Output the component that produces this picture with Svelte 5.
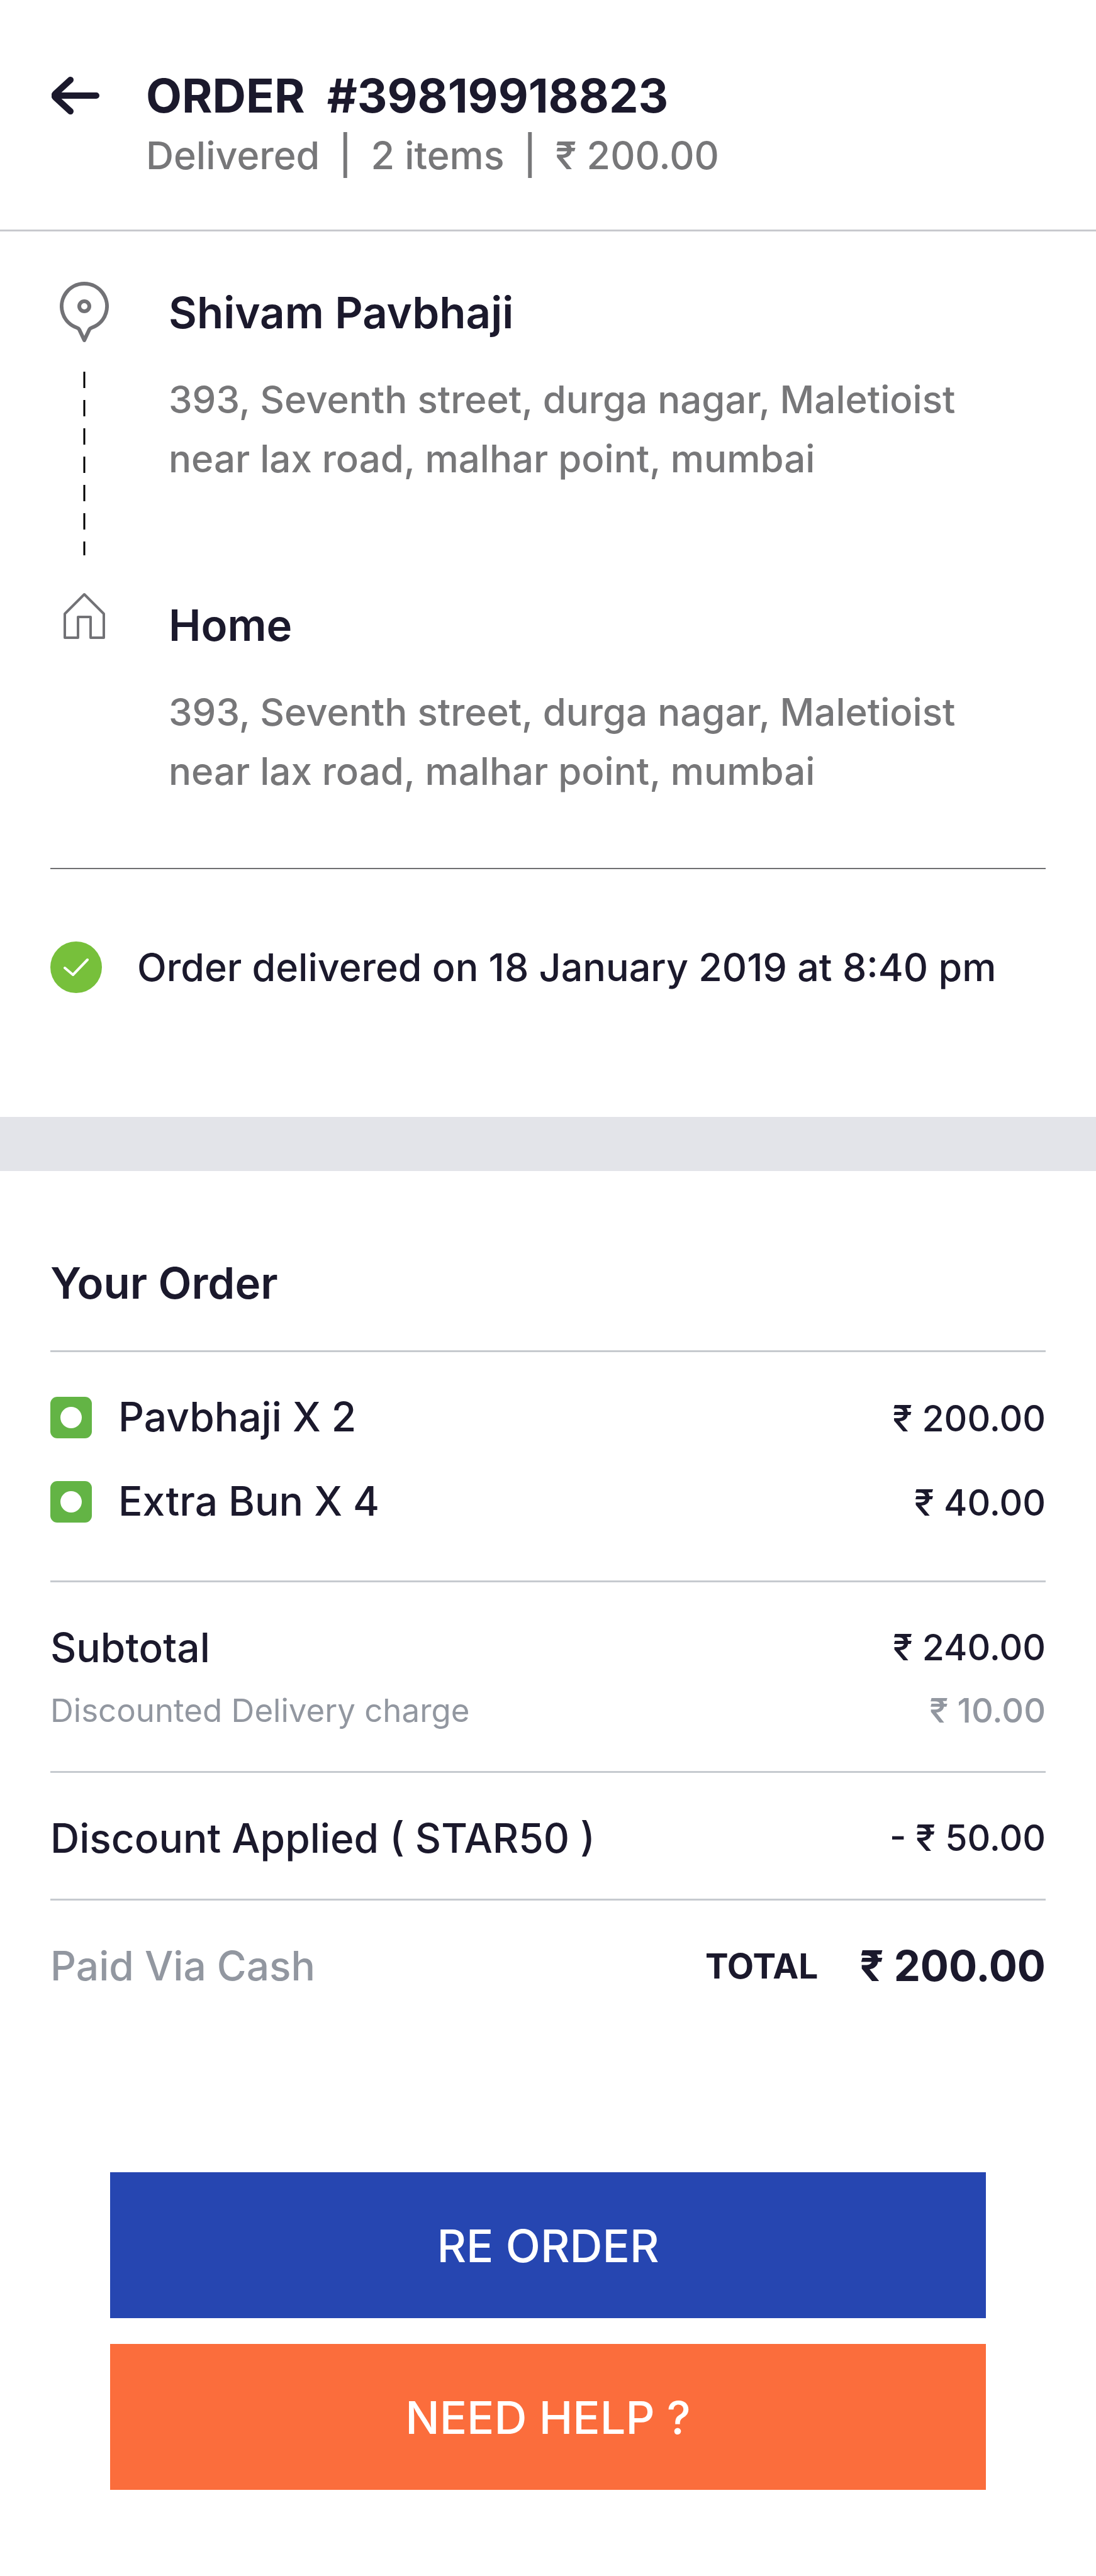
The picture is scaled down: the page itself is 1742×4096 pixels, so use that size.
<script>
  const order = {
    id: '39819918823',
    status: 'Delivered',
    deliveredAt: '18 January 2019 at 8:40 pm',
    payment: 'Cash',
    coupon: 'STAR50',
    items: [
      { name: 'Pavbhaji', qty: 2, price: 200 },
      { name: 'Extra Bun', qty: 4, price: 40 }
    ],
    subtotal: 240,
    delivery: 10,
    discount: 50,
    total: 200
  };

  const address = '393, Seventh street, durga nagar, Maletioist near lax road, malhar point, mumbai';

  const stops = [
    { kind: 'restaurant', name: 'Shivam Pavbhaji', address },
    { kind: 'home', name: 'Home', address }
  ];

  function rupees(amount) {
    return `₹ ${amount.toFixed(2)}`;
  }
</script>

<div class="screen">
  <header class="header">
    <button class="back" aria-label="Back">
      <svg width="76" height="60" viewBox="0 0 76 60" fill="none" stroke="currentColor" stroke-width="10" stroke-linecap="round" stroke-linejoin="round">
        <path d="M71 30H7M30 5L6 27Q3 30 6 33L30 55" />
      </svg>
    </button>
    <div class="header-text">
      <h1>ORDER&nbsp; #{order.id}</h1>
      <p class="summary">
        <span>{order.status}</span>
        <span>|</span>
        <span>{order.items.length} items</span>
        <span>|</span>
        <span>{rupees(order.total)}</span>
      </p>
    </div>
  </header>

  <section class="route">
    {#each stops as stop}
      <div class="stop {stop.kind}">
        <div class="rail">
          {#if stop.kind === 'restaurant'}
            <svg class="pin" width="78" height="98" viewBox="0 0 78 98" fill="none" stroke="currentColor" stroke-width="6" stroke-linejoin="round">
              <path d="M39 93L31 76Q30 74 27 73A36 36 0 1 1 51 73Q48 74 47 76Z" />
              <circle cx="39" cy="39" r="8" />
            </svg>
            <svg class="dashes" width="4" height="292" viewBox="0 0 4 292">
              <line x1="2" y1="0" x2="2" y2="292" stroke="#000" stroke-width="3" stroke-dasharray="26 19" />
            </svg>
          {:else}
            <svg width="66" height="74" viewBox="0 0 66 74" fill="none" stroke="currentColor" stroke-width="4" stroke-linejoin="round">
              <path d="M2 34L33 3L64 34V72H43V39H23V72H2Z" />
            </svg>
          {/if}
        </div>
        <div class="stop-text">
          <h2>{stop.name}</h2>
          <p>{stop.address}</p>
        </div>
      </div>
    {/each}

    <div class="status">
      <svg width="82" height="82" viewBox="0 0 82 82" fill="none">
        <circle cx="41" cy="41" r="41" fill="#77c03b" />
        <path d="M23 42L36 53L59 29" stroke="#fff" stroke-width="4" stroke-linecap="round" stroke-linejoin="round" />
      </svg>
      <p>Order delivered on {order.deliveredAt}</p>
    </div>
  </section>

  <section class="bill">
    <h2>Your Order</h2>

    <ul class="items">
      {#each order.items as item}
        <li>
          <span class="veg"></span>
          <span class="name">{item.name} X {item.qty}</span>
          <span class="price">{rupees(item.price)}</span>
        </li>
      {/each}
    </ul>

    <dl>
      <div class="row">
        <dt>Subtotal</dt>
        <dd>{rupees(order.subtotal)}</dd>
      </div>
      <div class="row small">
        <dt>Discounted Delivery charge</dt>
        <dd>{rupees(order.delivery)}</dd>
      </div>
    </dl>

    <dl>
      <div class="row">
        <dt>Discount Applied ( {order.coupon} )</dt>
        <dd>- {rupees(order.discount)}</dd>
      </div>
    </dl>

    <div class="row total">
      <span class="paid">Paid Via {order.payment}</span>
      <span class="total-label">TOTAL</span>
      <strong>{rupees(order.total)}</strong>
    </div>
  </section>

  <div class="actions">
    <button class="reorder">RE ORDER</button>
    <button class="help">NEED HELP ?</button>
  </div>
</div>

<style>
  :global(body) {
    margin: 0;
    background: #fff;
  }

  .screen {
    font-family: Inter, "Liberation Sans", sans-serif;
    font-weight: 500;
    color: #1b192c;
  }

  h1,
  h2,
  p,
  ul,
  dl,
  dd {
    margin: 0;
    padding: 0;
  }

  button {
    padding: 0;
    border: none;
    font: inherit;
    cursor: pointer;
  }

  .header {
    display: flex;
    gap: 74px;
    padding: 108px 80px 67px 82px;
    border-bottom: 3px solid #c8c9ce;
  }

  .back {
    display: flex;
    align-items: center;
    height: 88px;
    background: none;
    color: inherit;
  }

  h1 {
    font-size: 74px;
    font-weight: 700;
    line-height: 88px;
  }

  .summary {
    display: flex;
    gap: 30px;
    font-size: 61px;
    line-height: 102px;
    color: #777779;
  }

  .route {
    padding: 77px 80px 197px;
    border-bottom: 86px solid #e3e4e9;
  }

  .stop {
    display: flex;
    gap: 80px;
  }

  .stop.restaurant {
    min-height: 497px;
  }

  .rail {
    display: flex;
    flex-direction: column;
    align-items: center;
    width: 108px;
    color: #727276;
  }

  .pin {
    margin-top: 3px;
  }

  .dashes {
    margin-top: 45px;
  }

  .stop-text {
    flex: 1;
    max-width: 1300px;
    padding-top: 7px;
  }

  h2 {
    font-size: 69px;
    font-weight: 600;
    line-height: 90px;
  }

  .stop-text p {
    margin-top: 46px;
    font-size: 60px;
    line-height: 94px;
    color: #777779;
  }

  .status {
    display: flex;
    align-items: center;
    gap: 56px;
    margin-top: 107px;
    padding-top: 115px;
    border-top: 2px solid #6f6f71;
    font-size: 61px;
    line-height: 82px;
  }

  .bill {
    padding: 133px 80px 0;
  }

  .items {
    margin-top: 62px;
    padding: 37px 0 58px;
    border-top: 3px solid #c6cacf;
    border-bottom: 3px solid #c6cacf;
    list-style: none;
  }

  .items li {
    display: flex;
    align-items: baseline;
    gap: 42px;
    line-height: 131px;
  }

  .veg {
    display: flex;
    align-items: center;
    justify-content: center;
    align-self: center;
    width: 66px;
    height: 66px;
    border-radius: 11px;
    background: #63b445;
  }

  .veg::before {
    content: "";
    width: 34px;
    height: 34px;
    border-radius: 50%;
    background: #fff;
  }

  .name,
  dt,
  .paid {
    flex: 1;
    font-size: 64px;
  }

  .price,
  dd {
    font-size: 57px;
  }

  dl {
    padding: 54px 0 46px;
    border-bottom: 3px solid #c6cacf;
  }

  .row {
    display: flex;
    align-items: center;
    line-height: 100px;
  }

  .small {
    color: #9297a0;
  }

  .small dt {
    font-size: 51px;
    font-weight: 400;
  }

  .small dd {
    font-size: 54px;
  }

  .total {
    padding-top: 54px;
  }

  .paid {
    color: #9297a0;
  }

  .total-label {
    margin-right: 66px;
    font-size: 55px;
    font-weight: 700;
  }

  strong {
    font-size: 67px;
    font-weight: 700;
  }

  .actions {
    display: flex;
    flex-direction: column;
    gap: 41px;
    padding: 278px 175px 137px;
  }

  .actions button {
    height: 232px;
    font-size: 72px;
    color: #fff;
  }

  .reorder {
    background: #2646b1;
  }

  .help {
    background: #fb6d3c;
  }
</style>
